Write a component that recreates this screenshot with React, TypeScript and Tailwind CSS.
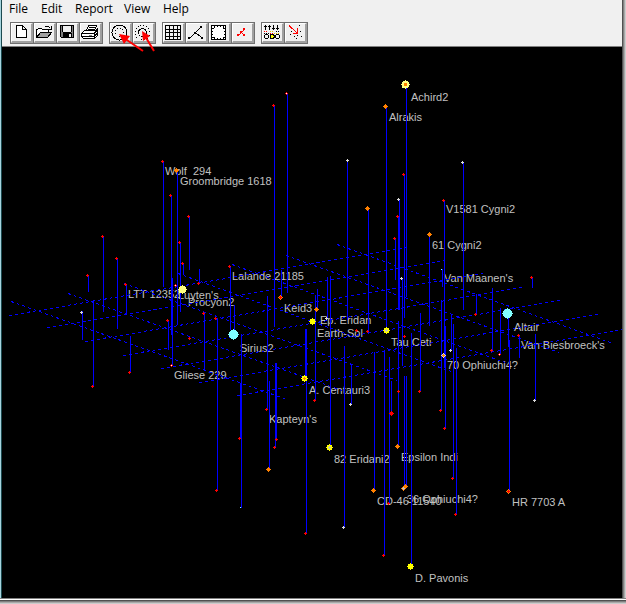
import React from "react";
import clsx from "clsx";

type Star = [x: number, y: number, kind: keyof typeof starKinds];

const RED = "#ff0000";
const ORANGE = "#ff8000";
const YELLOW = "#ffff00";
const PALE = "#ffff80";
const CYAN = "#80ffff";
const WHITE = "#d8d8d8";

const starKinds = {
  red: { color: RED, size: 1, core: "" },
  redCore: { color: RED, size: 1, core: "#ffffff" },
  redBig: { color: RED, size: 2, core: "" },
  white: { color: WHITE, size: 1, core: "" },
  whiteOrange: { color: WHITE, size: 2, core: ORANGE },
  dot: { color: CYAN, size: 0, core: "" },
  orange: { color: ORANGE, size: 2, core: "" },
  orangeRed: { color: ORANGE, size: 2, core: RED },
  orangeWhite: { color: ORANGE, size: 2, core: "#c0c0c0" },
  yellow: { color: YELLOW, size: 3, core: "" },
  yellowWhite: { color: YELLOW, size: 3, core: "#c0c0c0" },
  yellowOrange: { color: YELLOW, size: 3, core: ORANGE },
  pale: { color: PALE, size: 4, core: "" },
  paleOrange: { color: PALE, size: 4, core: ORANGE },
  cyan: { color: CYAN, size: 5, core: "" },
};

// plane grid, [x1, y1, x2, y2]
const gridLines = [
  [9, 315, 407, 247],
  [47, 327, 445, 260],
  [85, 341, 483, 273],
  [123, 355, 522, 287],
  [161, 368, 560, 300],
  [199, 382, 598, 314],
  [237, 395, 636, 327],
  [11, 301, 287, 399],
  [68, 293, 342, 390],
  [124, 283, 397, 380],
  [178, 273, 451, 371],
  [232, 264, 505, 362],
  [286, 255, 559, 352],
  [337, 244, 613, 343],
];

// drop lines from each star to the plane, [x, top, bottom]
const stems = [
  [163, 161, 287], [177, 170, 325], [171, 195, 335], [172, 278, 365],
  [189, 216, 270], [180, 242, 312], [183, 263, 275], [103, 236, 312],
  [117, 258, 329], [88, 275, 292], [126, 284, 314], [199, 269, 283],
  [82, 311, 340], [93, 300, 386], [130, 336, 372], [168, 321, 350],
  [204, 313, 370], [274, 105, 327], [287, 93, 293], [386, 106, 330],
  [406, 84, 297], [404, 174, 318], [347, 160, 320], [368, 208, 333],
  [399, 199, 310], [398, 216, 310], [463, 162, 310], [444, 200, 368],
  [395, 238, 280], [230, 266, 330], [234, 305, 334], [281, 270, 297],
  [317, 289, 309], [327, 277, 318], [330, 276, 447], [267, 296, 409],
  [217, 318, 490], [241, 334, 508], [315, 295, 400], [305, 329, 378],
  [306, 329, 533], [344, 346, 527], [374, 352, 490], [384, 350, 555],
  [389, 357, 503], [402, 278, 366], [398, 321, 446], [240, 383, 438],
  [275, 363, 447], [276, 363, 439], [269, 381, 469], [351, 364, 404],
  [391, 381, 413], [404, 376, 488], [406, 376, 486], [429, 234, 326],
  [442, 269, 287], [532, 277, 288], [476, 294, 314], [492, 288, 350],
  [500, 308, 354], [508, 313, 347], [519, 335, 358], [535, 334, 400],
  [441, 300, 410], [445, 326, 428], [451, 315, 350], [453, 324, 478],
  [456, 348, 514], [420, 313, 391], [411, 333, 566], [509, 340, 491],
];

const stars: Star[] = [
  [162, 161, "red"], [176, 170, "orange"], [170, 195, "red"],
  [188, 216, "red"], [179, 242, "red"], [182, 263, "red"],
  [102, 236, "red"], [116, 258, "red"], [87, 275, "red"],
  [125, 284, "red"], [198, 283, "red"], [175, 285, "redCore"],
  [182, 289, "pale"], [81, 312, "white"], [92, 386, "red"],
  [129, 372, "red"], [167, 320, "red"], [189, 338, "red"],
  [203, 313, "red"], [171, 365, "redCore"], [273, 105, "red"],
  [286, 93, "redCore"], [385, 106, "orange"], [405, 84, "paleOrange"],
  [403, 174, "red"], [347, 160, "white"], [367, 208, "orange"],
  [398, 199, "white"], [397, 216, "red"], [462, 162, "white"],
  [443, 200, "red"], [394, 238, "red"], [229, 266, "red"],
  [233, 334, "cyan"], [280, 297, "orangeRed"], [316, 309, "orange"],
  [326, 318, "white"], [312, 321, "yellow"], [356, 330, "red"],
  [367, 331, "red"], [386, 330, "yellowWhite"], [215, 318, "red"],
  [266, 409, "red"], [216, 490, "red"], [240, 507, "dot"],
  [314, 400, "red"], [304, 378, "yellowOrange"], [305, 533, "red"],
  [343, 527, "white"], [373, 490, "orange"], [383, 555, "red"],
  [388, 503, "red"], [401, 278, "white"], [397, 446, "orange"],
  [404, 336, "red"], [239, 438, "red"], [276, 439, "red"],
  [274, 447, "red"], [268, 469, "orange"], [329, 447, "yellowWhite"],
  [350, 404, "white"], [391, 413, "redBig"], [398, 391, "red"],
  [405, 486, "orange"], [403, 488, "orangeWhite"], [429, 234, "orange"],
  [441, 269, "dot"], [531, 277, "red"], [475, 314, "red"],
  [491, 350, "red"], [499, 354, "redCore"], [507, 313, "cyan"],
  [518, 335, "red"], [534, 400, "white"], [450, 350, "white"],
  [443, 355, "whiteOrange"], [440, 410, "red"], [444, 428, "red"],
  [452, 478, "red"], [455, 514, "red"], [419, 391, "red"],
  [410, 566, "yellow"], [508, 491, "orangeRed"],
];

const labels: [number, number, string][] = [
  [411, 101, "Achird2"],
  [389, 121, "Alrakis"],
  [165, 175, "Wolf\u00a0 294"],
  [180, 185, "Groombridge 1618"],
  [446, 213, "V1581 Cygni2"],
  [432, 249, "61 Cygni2"],
  [232, 280, "Lalande 21185"],
  [444, 282, "Van Maanen's"],
  [128, 298, "LTT 12352"],
  [178, 299, "Luyten's"],
  [188, 306, "Procyon2"],
  [284, 312, "Keid3"],
  [320, 324, "Ep. Eridan"],
  [317, 337, "Earth-Sol"],
  [391, 346, "Tau Ceti"],
  [514, 331, "Altair"],
  [521, 349, "Van Biesbroeck's"],
  [240, 352, "Sirius2"],
  [447, 369, "70 Ophiuchi4?"],
  [174, 379, "Gliese 229"],
  [309, 394, "A. Centauri3"],
  [269, 423, "Kapteyn's"],
  [334, 463, "82 Eridani2"],
  [401, 461, "Epsilon Indi"],
  [377, 505, "CD-46 11540"],
  [407, 503, "36 Ophiuchi4?"],
  [512, 506, "HR 7703 A"],
  [415, 582, "D. Pavonis"],
];

const StarMark = ({ star }: { star: Star }) => {
  const [x, y, kind] = star;
  const { color, size, core } = starKinds[kind];
  const cx = x + 0.5;
  const cy = y + 0.5;
  return (
    <g>
      <path
        d={`M${x - size} ${cy}h${size * 2 + 1}M${cx} ${y - size}v${size * 2 + 1}`}
        stroke={color}
      />
      {size === 2 && <rect x={x - 1} y={y - 1} width="3" height="3" fill={color} />}
      {size === 3 && <rect x={x - 2} y={y - 2} width="5" height="5" fill={color} />}
      {size > 3 && <circle cx={cx} cy={cy} r={size} fill={color} />}
      {core && size === 1 && <rect x={x} y={y} width="1" height="1" fill={core} />}
      {core && size === 4 && <rect x={x - 1} y={y - 1} width="3" height="3" fill={core} />}
      {core && size > 1 && (
        <path d={`M${x - 1} ${cy}h3M${cx} ${y - 1}v3`} stroke={core} />
      )}
    </g>
  );
};

const StarMap = () => (
  <svg viewBox="2 47 620 551" className="block w-full" role="img" aria-label="Star map">
    <g fill="#c0c0c0" className="font-['Liberation_Sans',Arial,sans-serif] text-[11px]">
      {labels.map(([x, y, name]) => (
        <text key={name} x={x} y={y}>
          {name}
        </text>
      ))}
    </g>
    <g stroke="#0000ff" shapeRendering="crispEdges" fill="none">
      {gridLines.map(([x1, y1, x2, y2], i) => (
        <line key={i} x1={x1} y1={y1 + 0.5} x2={x2} y2={y2 + 0.5} strokeDasharray="3 3" />
      ))}
      {stems.map(([x, top, bottom], i) => (
        <path key={i} d={`M${x + 0.5} ${top}V${bottom}`} />
      ))}
    </g>
    <g shapeRendering="crispEdges">
      {stars.map((star, i) => (
        <StarMark key={i} star={star} />
      ))}
    </g>
  </svg>
);

const icons = {
  newFile: (
    <path d="M6.5 3.5h6l4 4v8h-10zM12.5 3.5v4h4" fill="#fff" stroke="#000" />
  ),
  open: (
    <>
      <path d="M3.5 15.5v-8h1l1-1h3l1 1h6v3" fill="#fff" stroke="#000" />
      <path d="M3.5 15.5l4-5h11l-4 5z" fill="#a0a0a0" stroke="#000" />
      <path d="M11.5 5.5l1-1h3l2 2M18.5 4v3.5h-4" fill="none" stroke="#000" />
    </>
  ),
  save: (
    <>
      <path d="M4.5 3.5h13v12h-12l-1-1z" fill="#808080" stroke="#000" />
      <path d="M7 4h8v6h-8z" fill="#f0f0f0" />
      <path d="M7 11h9v5h-9z" fill="#000" />
      <path d="M13 12h2v3h-2z" fill="#f0f0f0" />
      <path d="M7 10.5h8M6.5 4v6M15.5 4v6" stroke="#000" />
    </>
  ),
  print: (
    <>
      <path d="M7.5 8.5l2-5h8l-2 5" fill="#fff" stroke="#000" />
      <path d="M9.500 5.5h6M9 7.5h6" stroke="#000" />
      <path d="M5.5 8.5h11l2-2v7l-3 3h-11l-2-2v-3z" fill="#fff" stroke="#000" />
      <path d="M3 11.5h12l3-3M3 14.5h12l3-3M5 16.5h10M15.5 11v6" fill="none" stroke="#000" />
      <path d="M10 13h3" stroke="#808080" />
    </>
  ),
  innerOrbit: (
    <>
      <circle cx="10.5" cy="10.5" r="7.5" fill="none" stroke="#000" />
      <circle cx="10.5" cy="10.5" r="4.5" fill="none" stroke="#000" strokeDasharray="1 2" />
    </>
  ),
  outerOrbit: (
    <>
      <circle cx="10.5" cy="10.5" r="7.5" fill="none" stroke="#000" strokeDasharray="1 2" />
      <circle cx="10.5" cy="10.5" r="4" fill="none" stroke="#000" />
    </>
  ),
  grid: (
    <path
      d="M3.5 3.5h15v14h-15zM7.5 3v15M11.5 3v15M15.500 3v15M3 7.500h15M3 10.500h15M3 14.500h15"
      fill="none"
      stroke="#000"
    />
  ),
  axes: (
    <>
      <path d="M16.5 4.5l-6 6l-6 6M10.5 10.5l6 5" fill="none" stroke="#000" />
      <path d="M15 4h2v2h-2zM9 10h2v2h-2zM3 15h2v2h-2zM16 15h2v2h-2z" />
    </>
  ),
  frame: (
    <>
      <path d="M3.5 3.5h14v14h-14z" fill="#fff" stroke="#000" />
      <path
        d="M6.5 4v2M9.5 4v1M12.5 4v1M15.5 4v2M6.5 15v2M9.5 16v1M12.5 16v1M15.5 15v2M4 6.5h2M4 9.5h1M4 12.5h1M4 15.5h2M15 6.5h2M16 9.5h1M16 12.5h1M15 15.5h2"
        stroke="#000"
      />
    </>
  ),
  redAxes: (
    <>
      <path d="M13.5 7.5l-6 6M10.5 10.5l3 3" fill="none" stroke="#f00" />
      <path d="M12 6h2v2h-2zM9 9h2v2h-2zM6 12h2v2h-2zM12 12h2v2h-2z" fill="#f00" />
    </>
  ),
  filter: (
    <>
      <path
        d="M4.5 3v5M3 4.5h3M8.5 3v5M7 4.5h3M12.5 3v5M11 6.5h3M16.5 3v5M15 6.5h3"
        stroke="#000"
      />
      <path d="M3 9.5h3M9 11.5h3" stroke="#f00" strokeDasharray="1 1" />
      <path d="M9 9.5h4M13 11.5h5" stroke="#e0c000" strokeDasharray="1 1" />
      <path d="M15 9.5h4M3 11.5h5" stroke="#000" strokeDasharray="1 1" />
      <path
        d="M4.5 12.5h2l1 1v2l-1 1h-2l-1-1v-2zM15.5 12.5h2l1 1v2l-1 1h-2l-1-1v-2z"
        fill="#f0f0f0"
        stroke="#000"
      />
      <path d="M10 12.5h2l1 1v2l-1 1h-2l-1-1v-2z" fill="#ff0" stroke="#000" />
    </>
  ),
  pointer: (
    <>
      <path d="M5 3.5l8 7.5M13.5 6v5h-5" fill="none" stroke="#f00" />
      <path d="M15 3h1v1h-1zM6 12h1v1h-1zM10 14h1v1h-1zM16 9h1v1h-1zM17 14h1v1h-1zM13 13h1v1h-1zM7 9h1v1h-1zM12 16h1v1h-1z" />
    </>
  ),
};

const toolGroups: { name: keyof typeof icons; label: string }[][] = [
  [
    { name: "newFile", label: "New" },
    { name: "open", label: "Open" },
    { name: "save", label: "Save" },
    { name: "print", label: "Print" },
  ],
  [
    { name: "innerOrbit", label: "Inner radius" },
    { name: "outerOrbit", label: "Outer radius" },
  ],
  [
    { name: "grid", label: "Grid" },
    { name: "axes", label: "Links" },
    { name: "frame", label: "Frame" },
    { name: "redAxes", label: "Routes" },
  ],
  [
    { name: "filter", label: "Filter" },
    { name: "pointer", label: "Center on star" },
  ],
];

const menus = [
  { name: "File", width: "w-8" },
  { name: "Edit", width: "w-[34px]" },
  { name: "Report", width: "w-[49px]" },
  { name: "View", width: "w-[39px]" },
  { name: "Help", width: "w-10" },
];

const App = () => {
  return (
    <div className="flex w-full flex-col bg-[#c8c8c8]">
      <div className="flex">
        {/* Left window edge */}
        <div className="w-[2px] shrink-0 border-r border-[#1c4a50] bg-[#a6d4de]" />
        <div className="min-w-0 flex-1 bg-[#f0f0f0]">
          <nav className="flex h-[22px] items-start pl-[7px] font-['Open_Sans','Noto_Sans',sans-serif] text-xs leading-[18px] text-black">
            {menus.map((menu) => (
              <button key={menu.name} type="button" className={clsx("text-left", menu.width)}>
                {menu.name}
              </button>
            ))}
          </nav>
          <div className="relative flex h-[25px] items-start gap-[5px] border-b border-[#808080] pl-2">
            {toolGroups.map((group, index) => (
              <div key={index} className={clsx("flex", index === 0 ? "pl-px" : "pl-[2px]")}>
                {group.map((tool) => (
                  <button
                    key={tool.name}
                    type="button"
                    aria-label={tool.label}
                    className="-ml-px h-[22px] w-6 border border-[#707070] bg-[#f0f0f0]"
                  >
                    <span className="block h-5 border-t border-l border-r-2 border-b-2 border-t-white border-r-[#a0a0a0] border-b-[#a0a0a0] border-l-white">
                      <svg viewBox="2 2 19 17" className="block h-[17px] w-[19px]" shapeRendering="crispEdges">
                        {icons[tool.name]}
                      </svg>
                    </span>
                  </button>
                ))}
              </div>
            ))}
            {/* Callout arrows over the radius tools */}
            <svg
              viewBox="0 0 44 26"
              className="pointer-events-none absolute top-[7px] left-[114px] h-[26px] w-11"
              fill="#f00"
              stroke="#f00"
            >
              <path d="M8 9L27 22M29 7l9 15" strokeWidth="2" fill="none" />
              <path d="M3 5l11 2-6 8zM26 2l8 5-7 5z" stroke="none" />
            </svg>
          </div>
          <main className="overflow-hidden bg-black">
            <StarMap />
          </main>
        </div>
        {/* Right drop shadow */}
        <div className="flex w-1 shrink-0">
          <div className="flex-1 bg-[#505050]" />
          <div className="flex-1 bg-[#808080]" />
          <div className="flex-1 bg-[#a8a8a8]" />
          <div className="flex-1 bg-[#cccccc]" />
        </div>
      </div>
      <div className="h-px bg-[#808080]" />
      <div className="h-px bg-white" />
      <div className="h-px bg-[#505050]" />
      <div className="h-px bg-[#808080]" />
      <div className="h-px bg-[#a8a8a8]" />
      <div className="h-px bg-[#cccccc]" />
    </div>
  );
};

export default App;
